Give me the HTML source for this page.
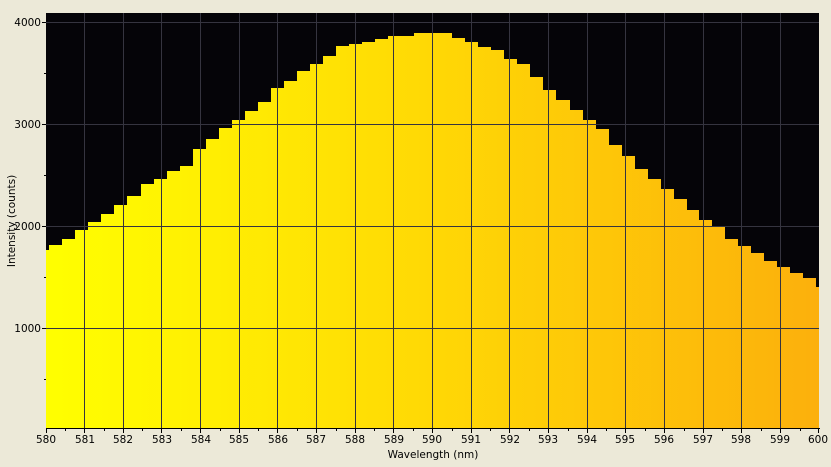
<!DOCTYPE html>
<html><head><style>
html,body{margin:0;padding:0;background:#ece9d8;width:831px;height:467px;overflow:hidden}
svg text{font-family:"DejaVu Sans","Liberation Sans",sans-serif;font-size:10.5px;fill:#000}
</style></head><body>
<svg width="831" height="467" xmlns="http://www.w3.org/2000/svg">
<defs><linearGradient id="g" x1="0" x2="1" y1="0" y2="0">
<stop offset="0" stop-color="#ffff00"/><stop offset="0.5" stop-color="#ffd805"/><stop offset="1" stop-color="#fcb00c"/></linearGradient></defs>
<rect x="46" y="13" width="773" height="415" fill="#050408"/>
<path fill="url(#g)" d="M46,428 V250 H49 V245 H62 V239 H75 V230 H88 V222 H101 V214 H114 V205 H127 V196 H141 V184 H154 V179 H167 V171 H180 V166 H193 V149 H206 V139 H219 V128 H232 V120 H245 V111 H258 V102 H271 V88 H284 V81 H297 V71 H310 V64 H323 V56 H336 V46 H349 V44 H362 V42 H375 V39 H388 V36 H414 V33 H452 V38 H465 V42 H478 V47 H491 V50 H504 V59 H517 V64 H530 V77 H543 V90 H556 V100 H570 V110 H583 V120 H596 V129 H609 V145 H622 V156 H635 V169 H648 V179 H661 V189 H674 V199 H687 V210 H699 V220 H712 V227 H725 V239 H738 V246 H751 V253 H764 V261 H777 V267 H790 V273 H803 V278 H816 V287 H819 V428 Z"/>
<g stroke="#35343f" stroke-width="1">
<line x1="46" x2="819" y1="22.5" y2="22.5"/><line x1="46" x2="819" y1="124.5" y2="124.5"/><line x1="46" x2="819" y1="226.5" y2="226.5"/><line x1="46" x2="819" y1="328.5" y2="328.5"/>
<line x1="84.5" x2="84.5" y1="13" y2="428"/><line x1="123.5" x2="123.5" y1="13" y2="428"/><line x1="161.5" x2="161.5" y1="13" y2="428"/><line x1="200.5" x2="200.5" y1="13" y2="428"/><line x1="239.5" x2="239.5" y1="13" y2="428"/><line x1="277.5" x2="277.5" y1="13" y2="428"/><line x1="316.5" x2="316.5" y1="13" y2="428"/><line x1="355.5" x2="355.5" y1="13" y2="428"/><line x1="393.5" x2="393.5" y1="13" y2="428"/><line x1="432.5" x2="432.5" y1="13" y2="428"/><line x1="471.5" x2="471.5" y1="13" y2="428"/><line x1="509.5" x2="509.5" y1="13" y2="428"/><line x1="548.5" x2="548.5" y1="13" y2="428"/><line x1="587.5" x2="587.5" y1="13" y2="428"/><line x1="625.5" x2="625.5" y1="13" y2="428"/><line x1="664.5" x2="664.5" y1="13" y2="428"/><line x1="703.5" x2="703.5" y1="13" y2="428"/><line x1="741.5" x2="741.5" y1="13" y2="428"/><line x1="780.5" x2="780.5" y1="13" y2="428"/>
</g>
<g stroke="#000" stroke-width="1">
<line x1="46" x2="820" y1="428.5" y2="428.5"/>
<line x1="42" x2="46" y1="22.5" y2="22.5"/><line x1="42" x2="46" y1="124.5" y2="124.5"/><line x1="42" x2="46" y1="226.5" y2="226.5"/><line x1="42" x2="46" y1="328.5" y2="328.5"/>
<line x1="44" x2="46" y1="73.5" y2="73.5"/><line x1="44" x2="46" y1="175.5" y2="175.5"/><line x1="44" x2="46" y1="277.5" y2="277.5"/><line x1="44" x2="46" y1="379.5" y2="379.5"/>
<path d="M46.5,428V433M84.5,428V433M123.5,428V433M161.5,428V433M200.5,428V433M239.5,428V433M277.5,428V433M316.5,428V433M355.5,428V433M393.5,428V433M432.5,428V433M471.5,428V433M509.5,428V433M548.5,428V433M587.5,428V433M625.5,428V433M664.5,428V433M703.5,428V433M741.5,428V433M780.5,428V433M818.5,428V433"/>
<path d="M65.5,428V431M104.5,428V431M142.5,428V431M181.5,428V431M220.5,428V431M258.5,428V431M297.5,428V431M336.5,428V431M374.5,428V431M413.5,428V431M452.5,428V431M490.5,428V431M529.5,428V431M568.5,428V431M606.5,428V431M645.5,428V431M684.5,428V431M722.5,428V431M761.5,428V431M800.5,428V431"/>
</g>
<g text-anchor="end"><text x="41" y="26">4000</text><text x="41" y="128">3000</text><text x="41" y="230">2000</text><text x="41" y="332">1000</text></g>
<g text-anchor="middle">
<text x="46" y="443">580</text><text x="85" y="443">581</text><text x="123" y="443">582</text><text x="162" y="443">583</text><text x="201" y="443">584</text><text x="239" y="443">585</text><text x="278" y="443">586</text><text x="316" y="443">587</text><text x="355" y="443">588</text><text x="394" y="443">589</text><text x="432" y="443">590</text><text x="471" y="443">591</text><text x="510" y="443">592</text><text x="548" y="443">593</text><text x="587" y="443">594</text><text x="625" y="443">595</text><text x="664" y="443">596</text><text x="703" y="443">597</text><text x="741" y="443">598</text><text x="780" y="443">599</text><text x="818" y="443">600</text>
<text x="433" y="458">Wavelength (nm)</text>
<text transform="translate(15,221) rotate(-90)">Intensity (counts)</text>
</g>
</svg>
</body></html>
